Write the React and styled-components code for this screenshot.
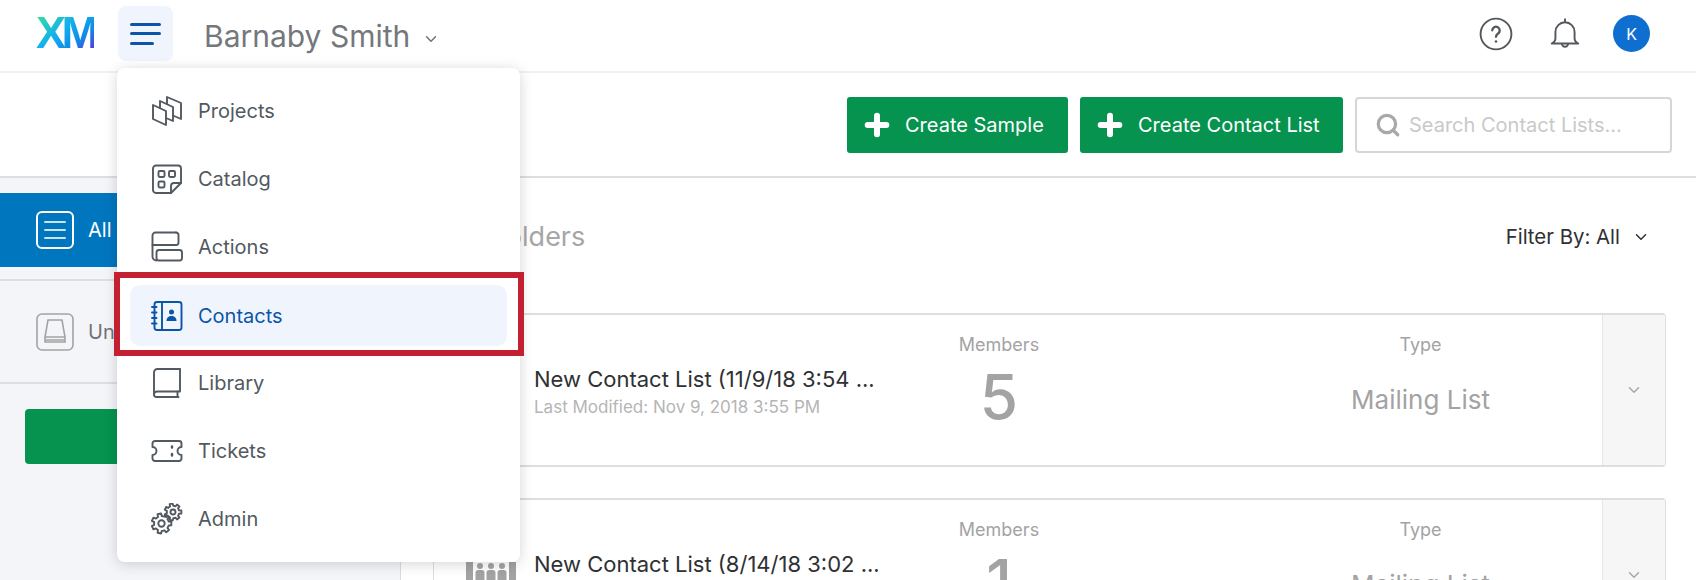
import React from "react";
import styled, { createGlobalStyle } from "styled-components";
import { ChevronDown, Plus, Search } from "lucide-react";

const GlobalStyle = createGlobalStyle`
    html, body {
        margin: 0;
        padding: 0;
        background: #fff;
        font-family: Inter, "Liberation Sans", sans-serif;
    }
`;

const Page = styled.div`
    position: relative;
    width: 1696px;
    height: 580px;
    overflow: hidden;
    background: #fff;
`;

const Header = styled.header`
    display: flex;
    align-items: center;
    height: 73px;
    padding: 0 46px 6px 36px;
    box-sizing: border-box;
    border-bottom: 2px solid #f1f1f3;
`;

const Logo = styled.div`
    width: 58px;
    margin-right: 24px;
    font-family: "Liberation Sans", sans-serif;
    font-size: 45px;
    font-weight: 700;
    letter-spacing: -4.5px;
    line-height: 46px;
    white-space: nowrap;
    background: linear-gradient(140deg, #34dea0 8%, #12aef0 45%, #0f8ee8 68%, #5a30e0 95%);
    -webkit-background-clip: text;
    background-clip: text;
    color: transparent;
`;

const BurgerButton = styled.button`
    display: flex;
    flex-direction: column;
    justify-content: center;
    gap: 6.5px;
    width: 55px;
    height: 55px;
    margin: 2px 31px 0 0;
    padding: 0 12px;
    border: 0;
    border-radius: 8px;
    background: #f0f5fd;

    span {
        display: block;
        height: 3px;
        border-radius: 2px;
        background: #0b55a8;
    }

    span:last-child {
        width: 78%;
    }
`;

const BrandName = styled.div`
    display: flex;
    align-items: center;
    gap: 12px;
    margin-top: 7px;
    font-size: 30px;
    color: #74777b;

    svg {
        margin-top: 6px;
    }
`;

const HeaderTools = styled.div`
    display: flex;
    align-items: center;
    gap: 33px;
    margin-left: auto;
    margin-top: 2px;
`;

const Avatar = styled.div`
    display: flex;
    align-items: center;
    justify-content: center;
    width: 37px;
    height: 37px;
    border-radius: 50%;
    background: #0f6fd1;
    color: #fff;
    font-size: 16px;
`;

const Toolbar = styled.div`
    display: flex;
    justify-content: flex-end;
    gap: 12px;
    height: 105px;
    padding: 24px 24px 0 0;
    box-sizing: border-box;
    border-bottom: 2px solid #dedede;
`;

const GreenButton = styled.button`
    display: flex;
    align-items: center;
    gap: 12px;
    width: ${(p) => p.$width}px;
    height: 56px;
    padding: 0 0 0 14px;
    box-sizing: border-box;
    border: 0;
    border-radius: 3px;
    background: #05934f;
    color: #fff;
    font-family: inherit;
    font-size: 20px;
    white-space: nowrap;
`;

const SearchBox = styled.div`
    display: flex;
    align-items: center;
    gap: 8px;
    width: 317px;
    height: 56px;
    padding-left: 18px;
    box-sizing: border-box;
    border: 2px solid #d6d6d6;
    border-radius: 4px;
    color: #c9c9c9;
    font-size: 20px;
    white-space: nowrap;
`;

const Main = styled.div`
    display: flex;
`;

const Sidebar = styled.aside`
    width: 401px;
    height: 403px;
    padding-top: 15px;
    box-sizing: border-box;
    background: #f4f5f9;
    border-right: 1px solid #dcdcdc;
    flex-shrink: 0;
`;

const SideItem = styled.div`
    display: flex;
    align-items: center;
    gap: 14px;
    height: ${(p) => (p.$active ? 74 : 103)}px;
    padding-left: 36px;
    box-sizing: border-box;
    font-size: 20px;
    background: ${(p) => (p.$active ? "#0076bf" : "transparent")};
    color: ${(p) => (p.$active ? "#fff" : "#6f7378")};
    border-bottom: ${(p) => (p.$active ? "0" : "2px solid #dedede")};
`;

const SideGap = styled.div`
    height: 12px;
    border-bottom: 2px solid #dedede;
`;

const SideButton = styled.div`
    height: 55px;
    margin: 25px 0 0 25px;
    border-radius: 4px;
    background: #05934f;
`;

const Content = styled.section`
    flex: 1;
    padding: 0 30px 0 32px;
    box-sizing: border-box;
`;

const ContentHead = styled.div`
    display: flex;
    align-items: center;
    justify-content: space-between;
    height: 135px;
    padding: 0 16px 0 58px;
    box-sizing: border-box;
`;

const FolderTitle = styled.h2`
    margin: 0 0 18px;
    font-size: 27px;
    font-weight: 400;
    color: #a6a6a6;
`;

const FilterBy = styled.div`
    display: flex;
    align-items: center;
    gap: 12px;
    margin-bottom: 18px;
    font-size: 20.4px;
    color: #2f3133;
`;

const Card = styled.article`
    display: grid;
    grid-template-columns: 100px 356px 218px 1fr 63px;
    height: 154px;
    margin-bottom: 31px;
    box-sizing: border-box;
    border: 1px solid #dedede;
    border-top-width: 2px;
    border-bottom-width: 2px;
    border-radius: 4px;
`;

const CardIcon = styled.div`
    padding: 62px 0 0 32px;
`;

const CardInfo = styled.div`
    display: flex;
    flex-direction: column;
    justify-content: center;
    gap: 5px;
    padding-top: 2px;
    white-space: nowrap;
`;

const CardTitle = styled.div`
    font-size: 22px;
    color: #2f3133;
`;

const CardDate = styled.div`
    font-size: 17px;
    color: #b5b5b5;
`;

const Stat = styled.div`
    padding: 19px 0 0 ${(p) => p.$offset || 0}px;
    text-align: center;
    color: #a3a3a3;
`;

const StatLabel = styled.div`
    font-size: 18px;
    line-height: 22px;
    margin-bottom: 11px;
`;

const StatValue = styled.div`
    font-size: ${(p) => (p.$big ? 62 : 26)}px;
    line-height: ${(p) => (p.$big ? 60 : 66)}px;
    font-weight: ${(p) => (p.$big ? 500 : 400)};
`;

const CardExpand = styled.div`
    display: flex;
    align-items: center;
    justify-content: center;
    background: #f6f6f6;
    border-left: 1px solid #e6e6e6;
    color: #a8a8a8;
`;

const NavMenu = styled.nav`
    position: absolute;
    top: 68px;
    left: 117px;
    width: 403px;
    height: 494px;
    padding-top: 9px;
    box-sizing: border-box;
    background: #fff;
    border-radius: 8px;
    box-shadow: 0 2px 14px rgba(0, 0, 0, 0.17);
`;

const NavItem = styled.div`
    display: flex;
    align-items: center;
    gap: 15px;
    height: ${(p) => (p.$active ? 61 : 68)}px;
    margin: ${(p) => (p.$active ? "4px" : "0")} 13px ${(p) => (p.$active ? "3px" : "0")};
    padding-left: 21px;
    border-radius: 10px;
    font-size: 20px;
    background: ${(p) => (p.$active ? "#f0f5fd" : "transparent")};
    color: ${(p) => (p.$active ? "#0b55a8" : "#525960")};
`;

const Highlight = styled.div`
    position: absolute;
    top: 272px;
    left: 114px;
    width: 410px;
    height: 84px;
    box-sizing: border-box;
    border: 6px solid #c32032;
`;

function LineIcon({ size = 32, children, ...rest }) {
    return (
        <svg
            width={size}
            height={size}
            viewBox="0 0 32 32"
            fill="none"
            stroke="currentColor"
            strokeWidth="1.9"
            strokeLinejoin="round"
            strokeLinecap="round"
            {...rest}
        >
            {children}
        </svg>
    );
}

const BellIcon = styled(LineIcon)`
    margin: 0 -2px 0 2px;
`;

function gearPath(cx, cy, outer, inner, teeth) {
    const step = (Math.PI * 2) / teeth;
    let d = "";
    for (let i = 0; i < teeth; i++) {
        const a = i * step;
        const pts = [
            [inner, a - step * 0.5],
            [inner, a - step * 0.3],
            [outer, a - step * 0.2],
            [outer, a + step * 0.2],
            [inner, a + step * 0.3],
        ];
        pts.forEach(([r, t], j) => {
            const x = (cx + r * Math.cos(t)).toFixed(2);
            const y = (cy + r * Math.sin(t)).toFixed(2);
            d += `${i === 0 && j === 0 ? "M" : "L"}${x} ${y} `;
        });
    }
    return d + "Z";
}

const icons = {
    projects: (
        <LineIcon>
            <path d="M2 10l13 6v14L2 24z" />
            <path d="M9 13V6l13 6v14l-7-3" />
            <path d="M16 9V2l14 6v16l-8-3.500" />
        </LineIcon>
    ),
    catalog: (
        <LineIcon>
            <path d="M5 2.500h22a3 3 0 0 1 3 3V20L20 30H5a3 3 0 0 1-3-3V5.500a3 3 0 0 1 3-3z" />
            <path d="M30 20h-7a3 3 0 0 0-3 3v7" />
            <rect x="7.500" y="8" width="6" height="6" rx="1.200" />
            <rect x="18" y="8" width="6" height="6" rx="1.200" />
            <rect x="7.500" y="18.500" width="6" height="6" rx="1.200" />
        </LineIcon>
    ),
    actions: (
        <LineIcon>
            <path d="M25 1.500H4.500a3 3 0 0 0-3 3v21a4 4 0 0 0 4 4" />
            <path d="M1.500 14h23.500a2.500 2.500 0 0 0 2.500-2.500V4a2.500 2.500 0 0 0-2.500-2.500" />
            <rect x="5.500" y="19" width="25.500" height="10.500" rx="2.500" />
        </LineIcon>
    ),
    contacts: (
        <LineIcon>
            <rect x="3.500" y="2" width="27" height="28" rx="2.500" />
            <path d="M11 2v28M1 7h4.500M1 12.500h4.500M1 18h4.500M1 23.500h4.500" />
            <circle cx="20.500" cy="12" r="2.500" fill="currentColor" stroke="none" />
            <path d="M15.500 21c0-3.500 2.200-5 5-5s5 1.500 5 5z" fill="currentColor" stroke="none" />
        </LineIcon>
    ),
    library: (
        <LineIcon>
            <path d="M29 2H6.500A3.500 3.500 0 0 0 3 5.500v22A2.500 2.500 0 0 0 5.500 30h22" />
            <path d="M29 2v22.500H6A3 3 0 0 0 3 27.500" />
            <path d="M26.500 24.500V30" />
        </LineIcon>
    ),
    tickets: (
        <LineIcon>
            <path d="M4 6h24a2.500 2.500 0 0 1 2.500 2.500v3.500a4 4 0 0 0 0 8v3.500A2.500 2.500 0 0 1 28 26H4a2.500 2.500 0 0 1-2.500-2.500V20a4 4 0 0 0 0-8V8.500A2.500 2.500 0 0 1 4 6z" />
            <path d="M21 11.500v1M21 19v1.500" strokeWidth="2.500" />
        </LineIcon>
    ),
    admin: (
        <LineIcon>
            <path d={gearPath(10.5, 20.5, 10, 7.4, 7)} />
            <circle cx="10.500" cy="20.500" r="3.200" />
            <path d={gearPath(22, 9, 8.500, 6.200, 7)} />
            <circle cx="22" cy="9" r="2.500" />
        </LineIcon>
    ),
};

const menuItems = [
    { label: "Projects", icon: "projects" },
    { label: "Catalog", icon: "catalog" },
    { label: "Actions", icon: "actions" },
    { label: "Contacts", icon: "contacts", active: true },
    { label: "Library", icon: "library" },
    { label: "Tickets", icon: "tickets" },
    { label: "Admin", icon: "admin" },
];

const lists = [
    {
        title: "New Contact List (11/9/18 3:54 ...",
        date: "Last Modified: Nov 9, 2018 3:55 PM",
        members: "5",
    },
    {
        title: "New Contact List (8/14/18 3:02 ...",
        date: "Last Modified: Aug 14, 2018 3:03 PM",
        members: "1",
    },
];

function ListIcon() {
    return (
        <svg width="38" height="38" viewBox="0 0 38 38" fill="none" stroke="currentColor" strokeWidth="2">
            <rect x="1" y="1" width="36" height="36" rx="5" />
            <path d="M9 11h20M9 19h20M9 27h20" strokeLinecap="round" opacity="0.8" />
        </svg>
    );
}

function TrayIcon() {
    return (
        <svg width="38" height="38" viewBox="0 0 38 38" fill="none" stroke="#a3a3a3" strokeWidth="1.600">
            <rect x="1" y="1" width="36" height="36" rx="5" />
            <path d="M12 7h14l3 17v5H9v-5zM9 24h20M9 27h20" />
        </svg>
    );
}

function PeopleIcon() {
    return (
        <svg width="50" height="50" viewBox="0 0 50 50" fill="#a3a3a3">
            <rect x="0" y="0" width="7" height="50" />
            <rect x="43" y="0" width="7" height="50" />
            {[14, 25, 36].map((x) => (
                <g key={x}>
                    <circle cx={x} cy="4" r="3" />
                    <rect x={x - 4.5} y="8" width="9" height="28" rx="3" />
                </g>
            ))}
        </svg>
    );
}

function App() {
    return (
        <Page>
            <GlobalStyle />
            <Header>
                <Logo>XM</Logo>
                <BurgerButton aria-label="Menu">
                    <span />
                    <span />
                    <span />
                </BurgerButton>
                <BrandName>
                    Barnaby Smith
                    <ChevronDown size={18} color="#6f7378" />
                </BrandName>
                <HeaderTools>
                    <LineIcon size={34} color="#54585c" strokeWidth="1.800">
                        <circle cx="16" cy="16" r="14.500" />
                        <path d="M12.500 12.500a3.500 3.500 0 1 1 5.500 3c-1.300.9-2 1.500-2 3" strokeWidth="2.200" />
                        <circle cx="16" cy="23" r="1.200" fill="currentColor" stroke="none" />
                    </LineIcon>
                    <BellIcon size={34} color="#54585c" strokeWidth="1.800">
                        <path d="M16 5a9 9 0 0 0-9 9v6c0 2-1.500 4-3.500 5h25c-2-1-3.500-3-3.500-5v-6a9 9 0 0 0-9-9zM16 2v3M13 25a3 3 0 0 0 6 0" />
                    </BellIcon>
                    <Avatar>K</Avatar>
                </HeaderTools>
            </Header>
            <Toolbar>
                <GreenButton $width={221}>
                    <Plus size={32} strokeWidth={4.500} />
                    Create Sample
                </GreenButton>
                <GreenButton $width={263}>
                    <Plus size={32} strokeWidth={4.500} />
                    Create Contact List
                </GreenButton>
                <SearchBox>
                    <Search size={26} color="#a8a8a8" strokeWidth={3} />
                    Search Contact Lists...
                </SearchBox>
            </Toolbar>
            <Main>
                <Sidebar>
                    <SideItem $active>
                        <ListIcon />
                        All Contacts
                    </SideItem>
                    <SideGap />
                    <SideItem>
                        <TrayIcon />
                        Unfiled
                    </SideItem>
                    <SideButton />
                </Sidebar>
                <Content>
                    <ContentHead>
                        <FolderTitle>Folders</FolderTitle>
                        <FilterBy>
                            Filter By: All
                            <ChevronDown size={18} />
                        </FilterBy>
                    </ContentHead>
                    {lists.map((list) => (
                        <Card key={list.title}>
                            <CardIcon>
                                <PeopleIcon />
                            </CardIcon>
                            <CardInfo>
                                <CardTitle>{list.title}</CardTitle>
                                <CardDate>{list.date}</CardDate>
                            </CardInfo>
                            <Stat>
                                <StatLabel>Members</StatLabel>
                                <StatValue $big>{list.members}</StatValue>
                            </Stat>
                            <Stat $offset={131}>
                                <StatLabel>Type</StatLabel>
                                <StatValue>Mailing List</StatValue>
                            </Stat>
                            <CardExpand>
                                <ChevronDown size={18} />
                            </CardExpand>
                        </Card>
                    ))}
                </Content>
            </Main>
            <NavMenu>
                {menuItems.map((item) => (
                    <NavItem key={item.label} $active={item.active}>
                        {icons[item.icon]}
                        {item.label}
                    </NavItem>
                ))}
            </NavMenu>
            <Highlight />
        </Page>
    );
}

export default App;
